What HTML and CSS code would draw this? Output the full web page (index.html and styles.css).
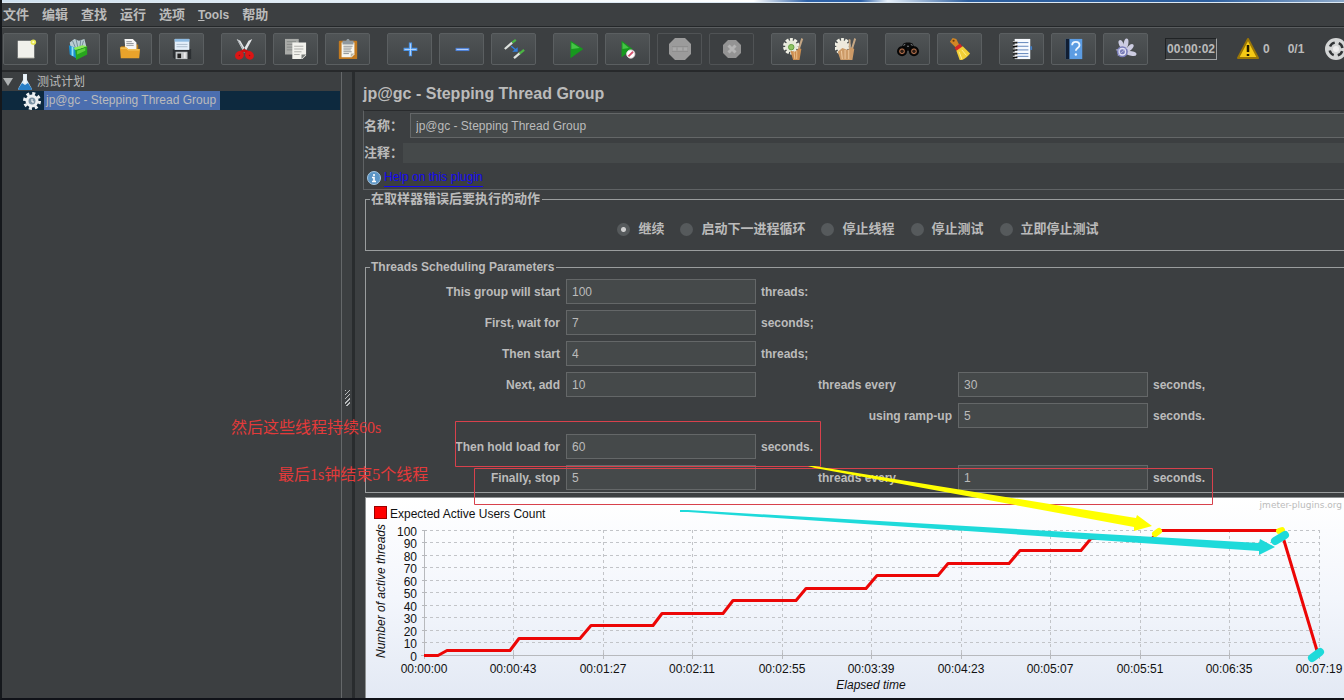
FILE: index.html
```html
<!DOCTYPE html>
<html lang="zh-CN">
<head>
<meta charset="utf-8">
<title>Apache JMeter</title>
<link rel="stylesheet" href="styles.css">
</head>
<body>
<div class="app">
  <div class="window-edge"></div>
  <nav class="menu">
    <button class="menu-item">文件</button>
    <button class="menu-item">编辑</button>
    <button class="menu-item">查找</button>
    <button class="menu-item">运行</button>
    <button class="menu-item">选项</button>
    <button class="menu-item"><u>T</u>ools</button>
    <button class="menu-item">帮助</button>
  </nav>

  <div class="toolbar">
    <div class="tool-group">
      <button class="tool" aria-label="New"><svg viewBox="0 0 24 24"><path d="M3 3h18v19H3z" fill="#f1f1ec"/><path d="M3 21h18v1H3z" fill="#c9c9c0"/><circle cx="20" cy="4.500" r="3" fill="#e6e552"/><circle cx="20" cy="4.500" r="1.200" fill="#ffffc8"/></svg></button>
      <button class="tool" aria-label="Templates"><svg viewBox="0 0 24 24"><path d="M3 5l5-4 5 2 6-2 2 8-8 4-9-2z" fill="#b9cdd3"/><path d="M6 3l3 7M10 2l2 9M15 2l-1 9M18 3l-2 7" stroke="#6d8793"/><path d="M2 8l8 3v11l-7-4z" fill="#1c8fd0"/><path d="M5 9l2 1v10l-2-1z" fill="#8ee1f5"/><path d="M9 13l13-4v9l-12 6z" fill="#27a51d"/><path d="M9 13l13-4-5-1-10 3z" fill="#8bee54"/><path d="M11 14l9-3v3l-9 4z" fill="#5ccf3d"/></svg></button>
      <button class="tool" aria-label="Open"><svg viewBox="0 0 24 24"><path d="M2 9h4l1-2h14v5H2z" fill="#b47816"/><path d="M6 1h9l4 4v8H7z" fill="#f6f6f6"/><path d="M8 4h6M8 6h8M8 8h8" stroke="#8b8f96"/><path d="M1 10h7l2 2h13l-1 10H2z" fill="#e9a32b"/><path d="M2 11h6l2 2h12" stroke="#f8d477" fill="none"/></svg></button>
      <button class="tool" aria-label="Save"><svg viewBox="0 0 24 24"><path d="M2 12h20v11H4l-2-2z" fill="#2c3033"/><path d="M4 1h16v12H4z" fill="#e4effa"/><path d="M4 1h16v3H4z" fill="#8fbbe2"/><path d="M6 7h12M6 9.500h12" stroke="#a9b9c9"/><path d="M5 15h13v8H5z" fill="#c3c7c9"/><path d="M7 17h4v5H7z" fill="#222"/><path d="M14 16h2v6h-2z" fill="#ededed"/></svg></button>
    </div>
    <div class="tool-group">
      <button class="tool" aria-label="Cut"><svg viewBox="0 0 24 24"><path d="M4 1l4 2 7 12-3 1zM21 1l-4 2-7 12 3 1z" fill="#e4e6e8"/><path d="M5 2l8 13" stroke="#9ea4a8"/><path d="M8 14l4-2 5 2-1 4-4-3-4 3z" fill="#c91010"/><g fill="#7c1414" stroke="#db1515" stroke-width="4"><ellipse cx="7" cy="19" rx="3" ry="2.500" transform="rotate(-40 7 19)"/><ellipse cx="18" cy="19" rx="3" ry="2.500" transform="rotate(40 18 19)"/></g></svg></button>
      <button class="tool" aria-label="Copy"><svg viewBox="0 0 24 24"><path d="M0 1h15v17H0z" fill="#a9aba8"/><path d="M2 4h10M2 7h10M2 10h10M2 13h10" stroke="#858987"/><path d="M8 5h15v14l-4 4H8z" fill="#f2f2ed"/><path d="M10 9h10M10 12h10M10 15h8M10 18h6" stroke="#a9aaa6"/><path d="M18 23v-5h5z" fill="#777b79"/></svg></button>
      <button class="tool" aria-label="Paste"><svg viewBox="0 0 24 24"><rect x="2" y="3" width="20" height="20" rx="1" fill="#c27a20"/><path d="M5 5h14v13l-3 3H5z" fill="#f7f6ef"/><path d="M7 9h10M7 11h9M7 13h8M7 15h9M7 17h6" stroke="#878b8d"/><path d="M6 3h4l1-2h2l1 2h4v4H6z" fill="#8f989e"/><path d="M15 21v-4h4z" fill="#b9b5a4"/></svg></button>
    </div>
    <div class="tool-group">
      <button class="tool" aria-label="Expand"><svg viewBox="0 0 24 24"><path d="M12.500 5v15M5 12.500h15" stroke="#4f96e8" stroke-width="3.500"/><path d="M12.500 6v13M6 12.500h13" stroke="#bedcff"/></svg></button>
      <button class="tool" aria-label="Collapse"><svg viewBox="0 0 24 24"><path d="M5 12.500h15" stroke="#4f82d6" stroke-width="3.500"/><path d="M6 12.500h13" stroke="#bfd5ff"/></svg></button>
      <button class="tool" aria-label="Toggle"><svg viewBox="0 0 24 24"><path d="M2 12L10 5" stroke="#dfe3df" stroke-width="2.500"/><path d="M10 5l4-3" stroke="#4bb543" stroke-width="2.500"/><path d="M12 22l7-6" stroke="#dfe3df" stroke-width="2.500"/><path d="M18 17l5-4" stroke="#4bb543" stroke-width="2.500"/><path d="M9 9l6 5" stroke="#2f7fe0" stroke-width="1.500"/><path d="M16 10v5h-6z" fill="#2f7fe0"/></svg></button>
    </div>
    <div class="tool-group">
      <button class="tool" aria-label="Start"><svg viewBox="0 0 24 24"><path d="M6 3l14 9-14 10z" fill="#17991e"/><path d="M7 5l9 6-9 1z" fill="#45c446"/></svg></button>
      <button class="tool" aria-label="Start no pauses"><svg viewBox="0 0 24 24"><path d="M5 3l12 9-12 9z" fill="#17991e"/><path d="M6 5l7 6-7 1z" fill="#45c446"/><circle cx="15" cy="17.500" r="4.500" fill="#fff" stroke="#e3d4d8"/><path d="M12.500 20l5-5" stroke="#d5526e" stroke-width="2"/></svg></button>
      <button class="tool" disabled aria-label="Stop"><svg viewBox="0 0 24 24"><path d="M7 1h10l6 6v10l-6 6H7l-6-6V7z" fill="#9b9b9b"/><path d="M4 9.500h16M4 14.500h16" stroke="#8e8e8e"/><path d="M5 12h3M10 12h4M16 12h3" stroke="#a9a9a9" stroke-width="3"/></svg></button>
      <button class="tool" disabled aria-label="Shutdown"><svg viewBox="0 0 24 24"><path d="M8 3h8l5 5v8l-5 5H8l-5-5V8z" fill="#949494"/><path d="M8.500 8.500l7 7M15.500 8.500l-7 7" stroke="#b4b4b4" stroke-width="3"/></svg></button>
    </div>
    <div class="tool-group">
      <button class="tool" aria-label="Clear"><svg viewBox="0 0 24 24"><circle cx="9" cy="9" r="7" fill="none" stroke="#f1f1e6" stroke-width="4" stroke-dasharray="3 1.400"/><circle cx="9" cy="9" r="6.500" fill="#e6e9d9"/><circle cx="9" cy="10" r="3" fill="#8fc463" stroke="#5d9b3a"/><path d="M20 0l2 1-4 12-2-1z" fill="#c5a785"/><path d="M8 14l5 1 5-4 2 1-2 12h-7z" fill="#cc8d4f"/><path d="M12 15l1 8M15 14v9" stroke="#f0c48e"/></svg></button>
      <button class="tool" aria-label="Clear all"><svg viewBox="0 0 24 24"><circle cx="8" cy="9" r="7" fill="none" stroke="#f1f1e6" stroke-width="4" stroke-dasharray="3 1.400"/><circle cx="8" cy="9" r="6.500" fill="#eee9dc"/><path d="M15 1l2 1v11h-2zM21 0l2 1-4 13-2-1z" fill="#c5a785"/><path d="M3 15l5-4 6 2 4-3 3 2-2 12H6z" fill="#cc9a67"/><path d="M7 14l1 9M11 13v10M15 13v10" stroke="#f0cda4"/></svg></button>
    </div>
    <div class="tool-group">
      <button class="tool" aria-label="Search"><svg viewBox="0 0 24 24"><path d="M7 6l3-1h4l3 1 4 8H3z" fill="#0b0b0b"/><path d="M7 8l2-1M17 8l-2-1M11 9h2" stroke="#92999f"/><circle cx="5.500" cy="14.500" r="4.500" fill="#2c1d15" stroke="#050505" stroke-width="2"/><circle cx="18.500" cy="14.500" r="4.500" fill="#2c1d15" stroke="#050505" stroke-width="2"/><circle cx="5.500" cy="14.500" r="2.500" fill="none" stroke="#c77d55"/><circle cx="18.500" cy="14.500" r="2.500" fill="none" stroke="#c77d55"/></svg></button>
      <button class="tool" aria-label="Reset search"><svg viewBox="0 0 24 24"><path d="M1 4l3-4 4 1 3 6-4 3z" fill="#d18625"/><circle cx="5" cy="3" r="1.200" fill="#6d3c0b"/><path d="M6 11l6-5 3 4-6 5z" fill="#d52626"/><path d="M8 14l7-5 8 8c-3 4-6 6-11 8z" fill="#f1cf36"/><path d="M11 15l3 8M14 13l5 6" stroke="#ffef92"/></svg></button>
    </div>
    <div class="tool-group">
      <button class="tool" aria-label="Functions"><svg viewBox="0 0 24 24"><path d="M4 1h17v22H4z" fill="#f7faff"/><path d="M7 5h12M7 9h12M7 13h12M7 17h12M7 20h12" stroke="#557bb5"/><path d="M2 5h5M2 9h5M2 13h5M2 17h5M2 21h5" stroke="#111" stroke-width="2"/><path d="M2 4h4M2 8h4M2 12h4M2 16h4M2 20h4" stroke="#d3d3d3"/><path d="M21 9h2v4h-2z" fill="#437ec4"/></svg></button>
      <button class="tool" aria-label="Help"><svg viewBox="0 0 24 24"><path d="M3 1h18v22H3z" fill="#5c9ce2"/><path d="M3 1h4v22H3z" fill="#101e33"/><path d="M10 8c0-5 8-5 8 0 0 3-4 3-4 6" fill="none" stroke="#eff7ff" stroke-width="2"/><circle cx="14" cy="18" r="1.300" fill="#eff7ff"/></svg></button>
      <button class="tool" aria-label="Undo history"><svg viewBox="0 0 24 24"><g fill="#cdcde2"><ellipse cx="7" cy="7" rx="2.500" ry="5" transform="rotate(-25 7 7)"/><ellipse cx="12" cy="6" rx="2.500" ry="5.500" transform="rotate(10 12 6)"/><ellipse cx="16" cy="11" rx="2.500" ry="5.500" transform="rotate(45 16 11)"/><ellipse cx="18" cy="17" rx="2.500" ry="5.500" transform="rotate(100 18 17)"/></g><circle cx="8" cy="15" r="6" fill="#777bb8"/><circle cx="8" cy="15" r="3.500" fill="none" stroke="#e1e1f5" stroke-width="1.500"/><path d="M1 13h5M3 19l10-8" stroke="#b9bbdd"/></svg></button>
    </div>
    <output class="timer">00:00:02</output>
    <button class="warn"><svg viewBox="0 0 24 24"><path d="M12 2l10 19H2z" fill="#f5c915" stroke="#9a7606" stroke-linejoin="round" stroke-width="2"/><path d="M12 8v7M12 17v2" stroke="#211a00" stroke-width="2.500"/></svg><span>0</span></button>
    <span class="count">0/1</span>
    <svg class="status" viewBox="0 0 24 24"><circle cx="12" cy="12" r="11" fill="#d4d6d6"/><circle cx="12" cy="12" r="6.500" fill="none" stroke="#303335" stroke-width="2.500" stroke-dasharray="6 4.210" stroke-dashoffset="-2.100"/><circle cx="12" cy="12" r="3" fill="#eee"/></svg>
  </div>

  <div class="main">
    <ul class="tree">
      <li class="node"><svg class="twisty" viewBox="0 0 12 12"><path d="M1 2h10l-5 8z" fill="#aeb1b2"/></svg><svg class="flask" viewBox="0 0 16 18"><path d="M6 1h4v6l5 9-1 1H2l-1-1 5-9z" fill="#e0edf6"/><path d="M5 10l3 2 3-2 4 6-1 1H2l-1-1z" fill="#287ec6"/><path d="M8 2v8" stroke="#fff"/></svg><span>测试计划</span></li>
      <li class="node child"><svg class="gear" viewBox="0 0 20 20"><circle cx="10" cy="10" r="7.500" fill="none" stroke="#edf0f2" stroke-width="3" stroke-dasharray="3 2.890"/><circle cx="10" cy="10" r="5" fill="#7b93a5" stroke="#edf0f2" stroke-width="3"/><path d="M10 8v3h2" stroke="#fff" fill="none"/></svg><span class="selected">jp@gc - Stepping Thread Group</span></li>
    </ul>
    <div class="splitter"><span class="grip"></span></div>
    <main class="editor">
      <h1 class="title">jp@gc - Stepping Thread Group</h1>
      <section class="identity">
        <div class="field name"><label for="name">名称：</label><input id="name" value="jp@gc - Stepping Thread Group"></div>
        <div class="field comment"><label for="comment">注释：</label><input id="comment" value=""></div>
        <div class="help"><svg viewBox="0 0 14 14"><circle cx="7" cy="7" r="6.500" fill="#5b95c6" stroke="#a5c5df"/><path d="M7 3v2M5 6.500h2V10M5 10.500h4" stroke="#fff" stroke-width="1.600" fill="none"/></svg><a href="#help">Help on this plugin</a></div>
      </section>

      <fieldset class="group">
        <legend class="cjk">在取样器错误后要执行的动作</legend>
        <div class="radios">
          <label><input type="radio" name="onerror" checked>继续</label>
          <label><input type="radio" name="onerror">启动下一进程循环</label>
          <label><input type="radio" name="onerror">停止线程</label>
          <label><input type="radio" name="onerror">停止测试</label>
          <label><input type="radio" name="onerror">立即停止测试</label>
        </div>
      </fieldset>

      <fieldset class="group">
        <legend>Threads Scheduling Parameters</legend>
        <div class="params">
          <label class="lead" for="total">This group will start</label><input id="total" value="100"><span class="unit">threads:</span>
          <label class="lead" for="wait">First, wait for</label><input id="wait" value="7"><span class="unit">seconds;</span>
          <label class="lead" for="first">Then start</label><input id="first" value="4"><span class="unit">threads;</span>
          <label class="lead" for="add">Next, add</label><input id="add" value="10"><label class="every" for="step">threads every</label><input id="step" value="30"><span>seconds,</span>
          <label class="ramp" for="rampup">using ramp-up</label><input id="rampup" value="5"><span>seconds.</span>
          <label class="lead" for="hold">Then hold load for</label><input id="hold" value="60"><span class="unit">seconds.</span>
          <label class="lead" for="stop">Finally, stop</label><input id="stop" value="5"><label class="every" for="stopstep">threads every</label><input id="stopstep" value="1"><span>seconds.</span>
        </div>
      </fieldset>

      <div class="chart">
        <svg viewBox="366 498 978 200" width="978" height="200">
          <rect x="374.500" y="506.500" width="12" height="12" fill="#f00" stroke="#9b0000"/>
          <text x="390" y="518">Expected Active Users Count</text>
          <text x="1342" y="508" text-anchor="end" class="credit">jmeter-plugins.org</text>
          <path class="grid" d="M424 530.500H1320M424 542.500H1320M424 555.500H1320M424 567.500H1320M424 580.500H1320M424 592.500H1320M424 605.500H1320M424 617.500H1320M424 630.500H1320M424 642.500H1320M513.500 530V655M603.500 530V655M692.500 530V655M782.500 530V655M871.500 530V655M961.500 530V655M1050.500 530V655M1140.500 530V655M1229.500 530V655M1319.500 530V655"/>
          <path class="axis" d="M424.500 530V659M421 655.500H1320M422 530.500h5M422 542.500h5M422 555.500h5M422 567.500h5M422 580.500h5M422 592.500h5M422 605.500h5M422 617.500h5M422 630.500h5M422 642.500h5M513.500 653v6M603.500 653v6M692.500 653v6M782.500 653v6M871.500 653v6M961.500 653v6M1050.500 653v6M1140.500 653v6M1229.500 653v6M1319.500 653v6"/>
          <g text-anchor="end">
            <text x="417" y="536">100</text><text x="417" y="548">90</text><text x="417" y="561">80</text><text x="417" y="573">70</text><text x="417" y="586">60</text><text x="417" y="598">50</text><text x="417" y="611">40</text><text x="417" y="623">30</text><text x="417" y="636">20</text><text x="417" y="648">10</text><text x="417" y="661">0</text>
          </g>
          <g text-anchor="middle">
            <text x="424" y="673">00:00:00</text><text x="513" y="673">00:00:43</text><text x="603" y="673">00:01:27</text><text x="692" y="673">00:02:11</text><text x="782" y="673">00:02:55</text><text x="871" y="673">00:03:39</text><text x="961" y="673">00:04:23</text><text x="1050" y="673">00:05:07</text><text x="1140" y="673">00:05:51</text><text x="1229" y="673">00:06:35</text><text x="1319" y="673">00:07:19</text>
            <text x="871" y="689" class="axis-title">Elapsed time</text>
            <text transform="translate(385 591) rotate(-90)" class="axis-title">Number of active threads</text>
          </g>
          <path class="series" d="M424 655.500H438L447 650.500H510L519 638.500H580L591 625.500H653L662 613.500H723L733 600.500H796L806 588.500H866L877 575.500H938L948 563.500H1009L1020 550.500H1081L1091 538.500H1152L1160 530.500H1281L1318 654"/>
        </svg>
      </div>
    </main>
  </div>

  <svg class="notes" width="1344" height="700" viewBox="0 0 1344 700">
    <path d="M455.500 421.500h365v45h-365zM474.500 468.500h738v36h-738z" fill="none" stroke="#d8414c"/>
    <text x="231" y="433">然后这些线程持续60s</text>
    <text x="278" y="480">最后1s钟结束5个线程</text>
    <g fill="#ff0" stroke="#ff0">
      <path d="M808 466l6 0L1136 518l1-3 15 11-18 5v-4L815 468z" stroke="none"/>
      <path d="M1155 534l4-3M1279 531l3-1" stroke-width="6" stroke-linecap="round"/>
    </g>
    <g fill="#1edada" stroke="#1edada">
      <path d="M680 510h8L1259 543l1-4 15 8-16 8v-4L688 512h-8z" stroke="none"/>
      <path d="M1275 541l10-6" stroke-width="8" stroke-linecap="round"/>
      <path d="M1312 658l8-6" stroke-width="8" stroke-linecap="round"/>
    </g>
  </svg>
</div>
</body>
</html>
```

FILE: styles.css
```css
* { box-sizing: border-box; }

body {
  margin: 0;
  overflow: hidden;
  background: #3c3f41;
  color: #bbb;
  font: bold 12px/16px "Liberation Sans", "Noto Sans CJK SC", sans-serif;
}

button, input { font: inherit; color: inherit; }

.app {
  position: relative;
  display: flex;
  flex-direction: column;
  min-height: 100vh;
  overflow: hidden;
  border-left: 2px solid #15181c;
  border-bottom: 2px solid #101218;
}

.window-edge {
  height: 3px;
  background: linear-gradient(90deg, #cfe0ee, #e9f2f8 32%, #fff 56%, #2e62a8 60%, #2e62a8 64%, #e8f1fa 66%, #2d5f9f 72%, #2d5f9f 90%, #8fabcb);
  border-bottom: 1px solid #dce8f2;
}

.menu {
  display: flex;
  gap: 13px;
  height: 24px;
  padding: 0 1px;
  align-items: center;
  border-bottom: 1px solid #242729;
}

.menu-item {
  padding: 0;
  border: 0;
  background: none;
  font-size: 13px;
  line-height: 20px;
}
.menu-item:nth-child(6) { font-size: 12px; }

.toolbar {
  display: flex;
  align-items: center;
  height: 45px;
  padding: 0 1px;
  border-top: 1px solid #5b5e60;
  border-bottom: 2px solid #27292b;
}

.tool-group { display: flex; flex: none; gap: 7px; margin-right: 17px; }

.tool {
  display: flex;
  align-items: center;
  justify-content: center;
  width: 45px;
  height: 32px;
  padding: 0;
  border: 1px solid #5b5f61;
  border-radius: 2px;
  background: linear-gradient(#505456, #414547);
}
.tool:disabled { background: none; border-color: #505355; }
.tool svg { width: 22px; height: 22px; }
.tool:disabled svg { width: 24px; height: 24px; }

.timer {
  flex: none;
  width: 52px;
  padding: 2px 0;
  border: 1px solid;
  border-color: #202325 #a0a3a4 #a0a3a4 #202325;
  text-align: center;
}

.warn {
  display: flex;
  align-items: center;
  gap: 3px;
  margin: 0 18px 0 19px;
  padding: 0;
  border: 0;
  background: none;
}
.warn svg { width: 24px; height: 24px; }

.count { flex: none; margin-right: 20px; }
.status { flex: none; width: 24px; height: 24px; }

.main { display: flex; flex: 1; }

.tree {
  flex: none;
  width: 338px;
  margin: 0;
  padding: 0;
  list-style: none;
  font-weight: normal;
}

.node { display: flex; align-items: center; height: 19px; }
.node.child { padding-left: 20px; background: #0d293e; gap: 2px; }
.twisty { width: 12px; height: 12px; }
.flask { width: 16px; height: 18px; margin: 0 4px 0 3px; }
.gear { width: 20px; height: 20px; }
.selected { padding: 1px 4px 2px 2px; background: #4b6eaf; }

.splitter {
  display: flex;
  flex: none;
  align-items: center;
  justify-content: center;
  width: 14px;
  margin-left: 1px;
  padding-top: 26px;
  border-left: 1px solid #65686a;
  border-right: 3px solid #292c2e;
}
.grip {
  width: 5px;
  height: 16px;
  background: repeating-linear-gradient(135deg, #b9bcbd 0 1px, #3c3f41 1px 3px);
}

.editor {
  flex: 1;
  min-width: 0;
  margin-right: -6px;
  padding-left: 8px;
}

.title {
  height: 38px;
  margin: 0;
  font-size: 16px;
  line-height: 43px;
}

.identity {
  border: 1px solid #5f6264;
  border-top-color: #292b2d;
  padding-top: 2px;
  margin: 0;
}

.field { display: flex; align-items: center; }
.field label { flex: none; width: 39px; font-size: 13px; }
.field input { flex: 1; min-width: 0; }
.name { gap: 7px; }
.comment { margin: 5px 0 4px; }
.comment input { height: 20px; border: 0; }

.help { display: flex; align-items: center; gap: 3px; height: 22px; padding-left: 3px; font-weight: normal; }
.help svg { width: 14px; height: 14px; }
.help a { color: #1408f0; text-decoration: none; border-bottom: 1px solid #1408f0; line-height: 17px; }

input {
  height: 25px;
  padding: 0 5px;
  border: 1px solid #646768;
  border-radius: 0;
  background: #45494a;
  font-weight: normal;
}

.group {
  min-width: 0;
  margin: 1px 0 8px 2px;
  padding: 4px 4px 2px 5px;
  border: 1px solid #9a9d9e;
}
.group + .group { margin: 0 0 4px 2px; }
.group legend { margin-left: -1px; padding: 0 2px 0 1px; height: 16px; }
.group .cjk { font-size: 13px; }

.radios { display: flex; justify-content: center; gap: 16px; padding: 10px 0 11px; }
.radios label { display: flex; align-items: center; gap: 8px; height: 16px; font-size: 13px; }
.radios input {
  appearance: none;
  width: 13px;
  height: 13px;
  margin: 0;
  padding: 0;
  border: 0;
  border-radius: 50%;
  background: #565a5c;
}
.radios input:checked { background: radial-gradient(circle, #d0d0d0 0 2px, #565a5c 3px); }

.params {
  display: grid;
  grid-template-columns: 190px 190px 52px 135px 190px auto;
  grid-auto-rows: 25px;
  gap: 6px 5px;
  align-items: center;
}
.params input { width: 100%; min-width: 0; }
.lead { grid-column: 1; padding-right: 1px; text-align: right; }
.unit { grid-column: 3; }
.every { grid-column: 4; }
.ramp { grid-column: 4; padding-right: 1px; text-align: right; }

.chart {
  margin-left: 2px;
  overflow: hidden;
  border: solid #8e9192;
  border-width: 1px 0 0 1px;
  background: linear-gradient(#fff, #f3f6fc 50%, #e3e9f4);
}
.chart svg { display: block; }
.chart text { font-size: 12px; font-weight: normal; fill: #111; }
.chart .credit { font-size: 9px; font-family: "DejaVu Sans", sans-serif; fill: #bbb; }
.chart .axis-title { font-style: italic; }
.grid { fill: none; stroke: #c2c4c8; stroke-dasharray: 3 3; }
.axis { fill: none; stroke: #b7b9bd; }
.series { fill: none; stroke: #ec0606; stroke-width: 3; stroke-linejoin: round; }

.notes { position: absolute; top: 0; left: -2px; pointer-events: none; }
.notes text {
  font: 400 16px "Liberation Serif", "Noto Sans CJK SC", serif;
  fill: #e23a3a;
}
```
